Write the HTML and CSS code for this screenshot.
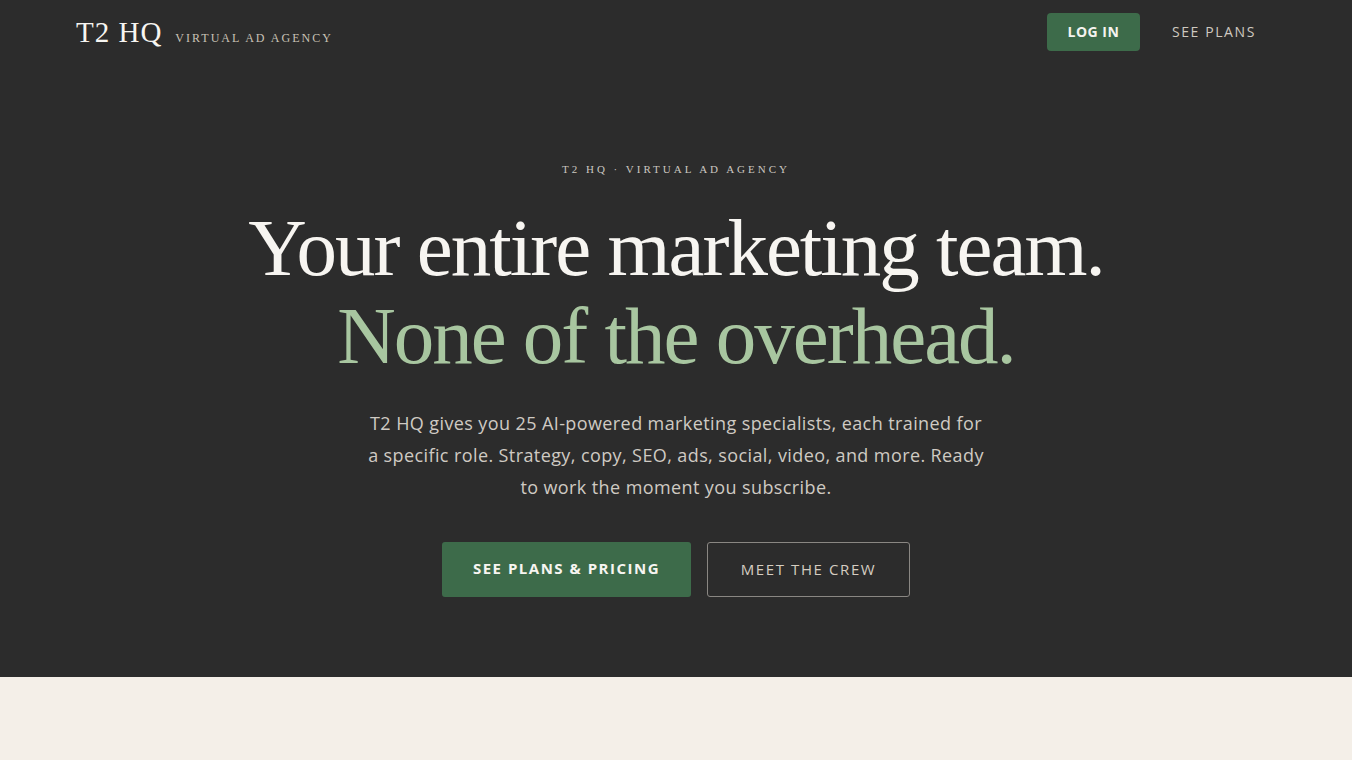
FILE: index.html
```html
<!DOCTYPE html>
<html lang="en">
<head>
<meta charset="utf-8">
<title>T2 HQ — Virtual Ad Agency</title>
<link rel="stylesheet" href="styles.css">
</head>
<body>
<header class="nav">
  <div class="brand">
    <span class="brand-name">T2 HQ</span>
    <span class="brand-tag">VIRTUAL AD AGENCY</span>
  </div>
  <nav class="nav-actions">
    <a class="btn-login" href="#">LOG IN</a>
    <a class="nav-link" href="#">SEE PLANS</a>
  </nav>
</header>
<section class="hero">
  <p class="eyebrow">T2 HQ · VIRTUAL AD AGENCY</p>
  <h1 class="headline">
    <span class="line-1">Your entire marketing team.</span>
    <span class="line-2">None of the overhead.</span>
  </h1>
  <p class="lead">T2 HQ gives you 25 AI-powered marketing specialists, each trained for a specific role. Strategy, copy, SEO, ads, social, video, and more. Ready to work the moment you subscribe.</p>
  <div class="cta-row">
    <a class="btn-primary" href="#">SEE PLANS &amp; PRICING</a>
    <a class="btn-outline" href="#">MEET THE CREW</a>
  </div>
</section>
<section class="below"></section>
</body>
</html>
```
FILE: styles.css
```css
* { box-sizing: border-box; }
html, body { margin: 0; padding: 0; }
body {
  background: #2c2c2c;
  font-family: "Open Sans", "DejaVu Sans", sans-serif;
  color: #f5f3ef;
}
a { text-decoration: none; }
.nav {
  height: 64px;
  display: flex;
  align-items: center;
  justify-content: space-between;
  padding: 0 96px 0 76px;
}
.brand { display: flex; align-items: baseline; gap: 13px; }
.brand-name {
  font-family: "Liberation Serif", serif;
  font-size: 29px;
  letter-spacing: 1px;
  color: #f7f5f1;
}
.brand-tag {
  font-family: "Liberation Serif", serif;
  font-size: 12px;
  letter-spacing: 2px;
  color: #c9c2b6;
}
.nav-actions { display: flex; align-items: center; gap: 32px; }
.btn-login {
  background: #3d6b4a;
  color: #f5f3ef;
  font-weight: 700;
  font-size: 14px;
  letter-spacing: 0.5px;
  height: 38px;
  width: 93px;
  padding-bottom: 2px;
  display: flex;
  align-items: center;
  justify-content: center;
  border-radius: 4px;
}
.nav-link {
  color: #cfc9c0;
  font-size: 14px;
  letter-spacing: 1.6px;
  padding-bottom: 2px;
}
.hero {
  height: 613px;
  display: flex;
  flex-direction: column;
  align-items: center;
  padding-top: 99px;
  text-align: center;
}
.eyebrow {
  margin: 0;
  font-family: "Liberation Serif", serif;
  font-size: 11px;
  letter-spacing: 3px;
  color: #cbc7c0;
}
.headline {
  margin: 29px 0 0;
  font-family: "Liberation Serif", serif;
  font-weight: 400;
  font-size: 81px;
  line-height: 88px;
  letter-spacing: -2px;
  display: flex;
  flex-direction: column;
}
.line-1 { color: #f7f5f1; }
.line-2 { color: #a8c6a0; }
.lead {
  margin: 27px 0 0;
  width: 618px;
  font-size: 18px;
  letter-spacing: 0.4px;
  line-height: 32px;
  color: #cfcac3;
}
.cta-row { margin-top: 39px; display: flex; gap: 16px; }
.btn-primary {
  background: #3d6b4a;
  color: #f7f5f1;
  font-weight: 700;
  font-size: 15px;
  letter-spacing: 1.5px;
  width: 249px;
  height: 55px;
  padding-bottom: 4px;
  display: flex;
  align-items: center;
  justify-content: center;
  border-radius: 3px;
}
.btn-outline {
  border: 1px solid #8a8783;
  color: #d5cdc1;
  font-size: 15px;
  letter-spacing: 1.6px;
  width: 203px;
  height: 55px;
  padding-bottom: 2px;
  display: flex;
  align-items: center;
  justify-content: center;
  border-radius: 3px;
}
.below { background: #f4efe8; height: 83px; }
```
